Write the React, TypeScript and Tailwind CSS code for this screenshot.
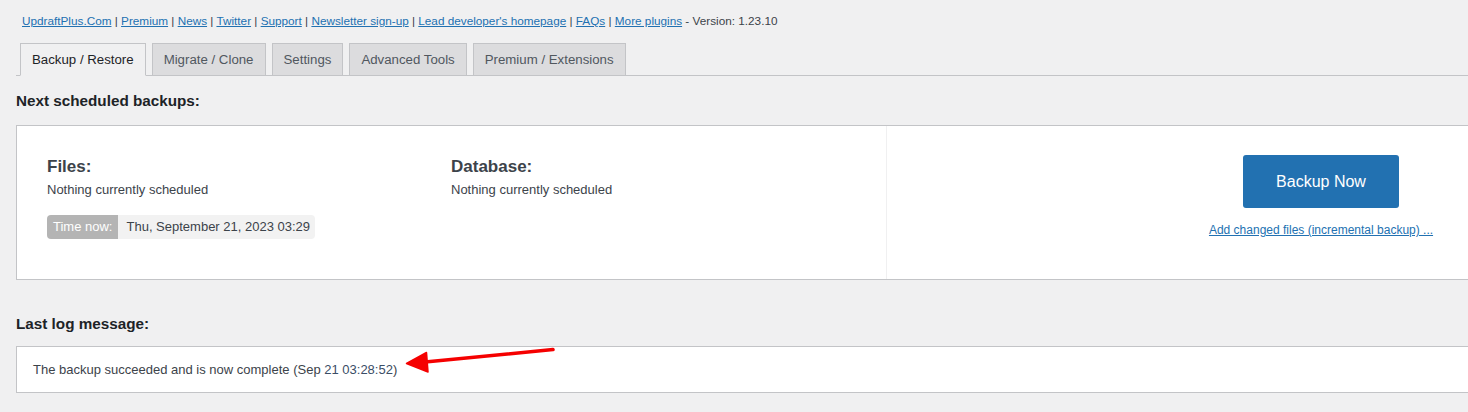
import React from 'react';

const links = [
  'UpdraftPlus.Com',
  'Premium',
  'News',
  'Twitter',
  'Support',
  'Newsletter sign-up',
  "Lead developer's homepage",
  'FAQs',
  'More plugins',
];

const tabs = ['Backup / Restore', 'Migrate / Clone', 'Settings', 'Advanced Tools', 'Premium / Extensions'];

export default function App() {
  return (
    <div
      className="relative min-h-[412px] w-full overflow-hidden bg-[#f0f0f1] text-[#3c434a]"
      style={{ fontFamily: '"Liberation Sans", Arial, sans-serif' }}
    >
      <div className="pl-[22px] pt-[13px] text-[11.75px] leading-[16px]">
        {links.map((l, i) => (
          <span key={l}>
            <a href="#" className="text-[#2271b1] underline">
              {l}
            </a>
            {i < links.length - 1 ? ' | ' : ''}
          </span>
        ))}
        <span> - Version: 1.23.10</span>
      </div>

      <div className="ml-4 mt-[14px] flex w-[1760px] border-b border-[#c3c4c7] pl-1">
        {tabs.map((t, i) => (
          <TabItem key={t} active={i === 0}>
            {t}
          </TabItem>
        ))}
      </div>

      <h2 className="ml-4 mt-[16px] text-[15.25px] font-bold leading-[18px] text-[#1d2327]">Next scheduled backups:</h2>

      <div className="ml-4 mt-[15px] flex h-[155px] w-[1740px] border border-[#c3c4c7] bg-white">
        <div className="flex w-[870px] shrink-0 border-r border-[#f0f0f1] pl-[30px] pt-[29px]">
          <div className="w-[404px]">
            <h3 className="text-[17px] font-bold leading-[24px] text-[#3c434a]">Files:</h3>
            <p className="mt-[2px] text-[13px] leading-[18px]">Nothing currently scheduled</p>
            <div className="mt-[16px] flex h-6 w-fit items-stretch text-[13px]">
              <span className="flex items-center rounded-l-[4px] bg-[#b4b4b4] px-[6px] text-white">Time now:</span>
              <span className="flex items-center rounded-r-[4px] bg-[#f2f2f2] pl-[8px] pr-[5px]">Thu, September 21, 2023 03:29</span>
            </div>
          </div>
          <div>
            <h3 className="text-[17px] font-bold leading-[24px] text-[#3c434a]">Database:</h3>
            <p className="mt-[2px] text-[13px] leading-[18px]">Nothing currently scheduled</p>
          </div>
        </div>
        <div className="flex w-[868px] flex-col items-center pt-[29px]">
          <button
            type="button"
            className="h-[53px] w-[156px] rounded-[3px] bg-[#2271b1] text-[16px] text-white"
          >
            Backup Now
          </button>
          <a href="#" className="mt-[14px] text-[12px] leading-[16px] text-[#2271b1] underline">
            Add changed files (incremental backup) ...
          </a>
        </div>
      </div>

      <h2 className="ml-4 mt-[35px] text-[15.25px] font-bold leading-[18px] text-[#1d2327]">Last log message:</h2>

      <div className="ml-4 mt-[13px] flex h-[47px] w-[1740px] items-center border border-[#c3c4c7] bg-white pl-4 text-[13px]">
        <span>
          The backup succeeded and is now complete (Sep <span className="text-[#3a4d66]">21 03:28:52</span>)
        </span>
      </div>

      <svg className="pointer-events-none absolute left-0 top-0" width="1468" height="412">
        <line x1="553" y1="349.5" x2="420" y2="362.5" stroke="#f50000" strokeWidth="3.5" strokeLinecap="round" />
        <polygon points="406.5,363.5 426.5,352.5 428,372" fill="#f50000" stroke="#f50000" strokeWidth="1.5" strokeLinejoin="round" />
      </svg>
    </div>
  );
}

function TabItem({ active, children }: { active: boolean; children: React.ReactNode }) {
  return (
    <div
      className={`-mb-px mr-[6px] flex h-[33px] items-center border border-[#c3c4c7] px-[11px] text-[13.25px] ${
        active ? 'border-b-[#f0f0f1] bg-[#f0f0f1] text-[#1d2327]' : 'bg-[#dcdcde] text-[#50575e]'
      }`}
    >
      {children}
    </div>
  );
}
